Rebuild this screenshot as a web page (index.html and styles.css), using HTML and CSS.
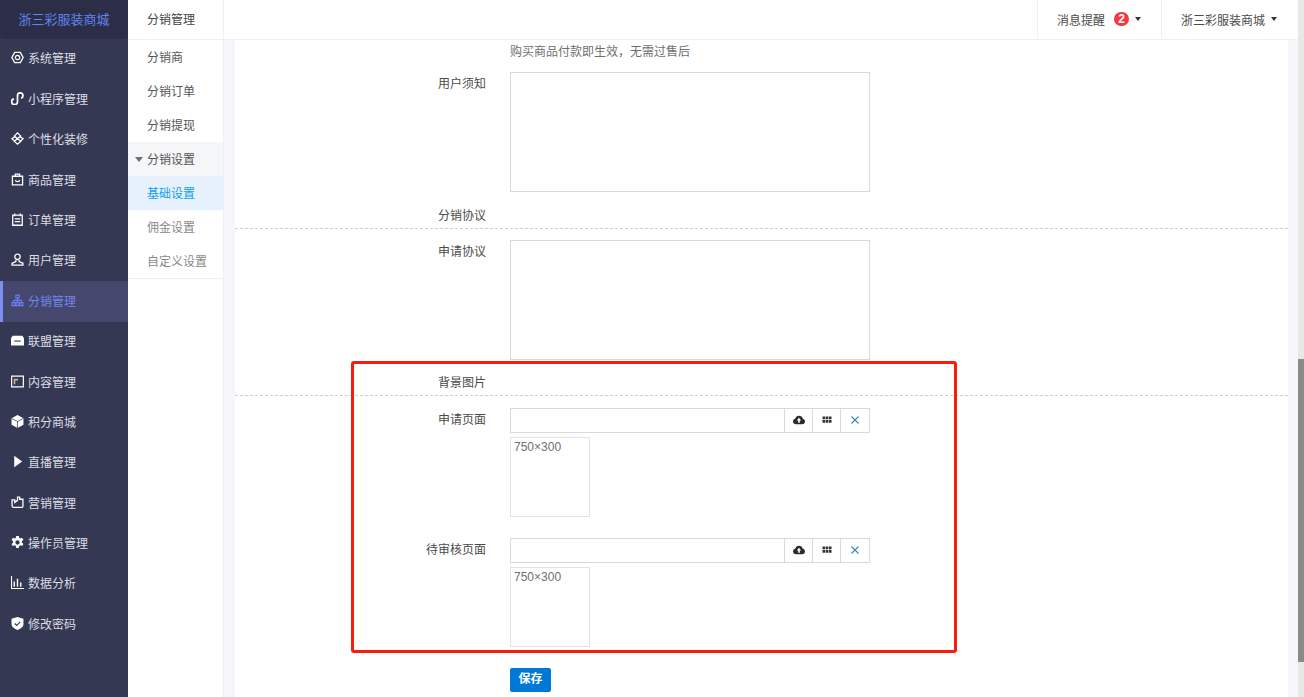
FILE: index.html
```html
<!DOCTYPE html>
<html lang="zh-CN">
<head>
<meta charset="utf-8">
<title>分销设置</title>
<link rel="stylesheet" href="styles.css">
</head>
<body>
<div class="app">
  <aside class="sidebar">
    <div class="logo">浙三彩服装商城</div>
    <nav class="menu">
      <a class="menu-item"><svg class="ic" viewBox="0 0 12 12" fill="none" stroke="#fff" stroke-width="1.2"><path d="M3.4 1.3h5.2L11.2 6 8.6 10.7H3.4L.8 6z"/><circle cx="6" cy="6" r="2"/></svg>系统管理</a>
      <a class="menu-item"><svg class="ic" viewBox="0 0 12 12" fill="none" stroke="#fff" stroke-width="1.6"><path d="M2.700 6.300A2.700 2.700 0 1 0 6 8.800V3.300A2.500 2.500 0 1 1 9.300 5.700"/></svg>小程序管理</a>
      <a class="menu-item"><svg class="ic" viewBox="0 0 12 12" fill="none" stroke="#fff" stroke-width="1.200"><path d="M6 .8 9 3.800 3 8.600 6 11.200 9 8.600 3 3.800zM3.500 4.500.8 6.200 3 8M8.500 4.500l2.700 1.700L9 8"/></svg>个性化装修</a>
      <a class="menu-item"><svg class="ic" viewBox="0 0 12 12" fill="none" stroke="#fff" stroke-width="1.2"><path d="M1.300 3h9.400v8H1.300zM4 3V1h4v2M4 6.500c.5 2 3.500 2 4 0"/></svg>商品管理</a>
      <a class="menu-item"><svg class="ic" viewBox="0 0 12 12" fill="none" stroke="#fff" stroke-width="1.200"><path d="M1.600 2h8.800v9.300H1.600zM3.500.5V3M8.500.5V3M3.500 5.500h5M3.500 8h5"/></svg>订单管理</a>
      <a class="menu-item"><svg class="ic" viewBox="0 0 12 12" fill="none" stroke="#fff" stroke-width="1.200"><circle cx="6" cy="3.500" r="2.500"/><path d="M4.500 6.500V8L1 9.500v1.700h10V9.500L7.500 8V6.500"/></svg>用户管理</a>
      <a class="menu-item menu-item-active"><svg class="ic" viewBox="0 0 12 12" fill="none" stroke="#6d7df0" stroke-width="1.100"><path d="M4.500 1h3v2.500h-3zM1 8h2.800v2.800H1zM4.600 8h2.800v2.800H4.600zM8.200 8H11v2.800H8.200zM6 3.500V8M2.400 8V5.800h7.200V8"/></svg>分销管理</a>
      <a class="menu-item"><svg class="ic" viewBox="0 0 12 12"><path fill="#fff" d="M1.500 1.500h9L12 4v6.500H0V4z"/><path stroke="#353852" stroke-width="1" d="M3 6.500h6"/></svg>联盟管理</a>
      <a class="menu-item"><svg class="ic" viewBox="0 0 12 12" fill="none" stroke="#fff" stroke-width="1.100"><path d="M.6 1.100h10.800v9.800H.6z"/><path fill="#c9b48a" stroke="none" d="M2.500 3.500h4V5H4v3.500H2.500z"/></svg>内容管理</a>
      <a class="menu-item"><svg class="ic" viewBox="0 0 12 12"><path fill="#fff" d="M6 0l5.500 3v6L6 12 .5 9V3z"/><path stroke="#353852" stroke-width=".7" fill="none" d="M.8 3.200 6 6l5.200-2.800M6 6v6"/></svg>积分商城</a>
      <a class="menu-item"><svg class="ic" viewBox="0 0 12 12"><path fill="#fff" d="M3 .8 10.300 6 3 11.200z"/></svg>直播管理</a>
      <a class="menu-item"><svg class="ic" viewBox="0 0 12 12" fill="none" stroke="#fff" stroke-width="1.200"><path d="M1 3.500h2.500V6L6 4V1h2v2h3v6.500c0 .8-.5 1-1 1H2.500C1.800 10.500 1 10 1 9z"/></svg>营销管理</a>
      <a class="menu-item"><svg class="ic" viewBox="0 0 12 12"><path fill="#fff" fill-rule="evenodd" d="M4.800 0h2.400l.3 1.700 1.200.6 1.600-.7 1.200 2-1.400 1.100v1.500l1.400 1.100-1.200 2-1.600-.7-1.200.7-.3 1.700H4.800l-.3-1.700-1.200-.7-1.600.7-1.200-2 1.400-1.100V4.700L.5 3.600l1.200-2 1.600.7 1.200-.6zM6 4a2 2 0 1 0 0 4 2 2 0 0 0 0-4z"/></svg>操作员管理</a>
      <a class="menu-item"><svg class="ic" viewBox="0 0 12 12" fill="none" stroke="#fff" stroke-width="1"><path d="M.5 0v11.500H12"/><path stroke-width="1.300" d="M3 10V5M6 10V2.500M9 10V6"/></svg>数据分析</a>
      <a class="menu-item"><svg class="ic" viewBox="0 0 12 12"><path fill="#fff" d="M6 0l5.500 1.700v4.800C11.500 9.500 8.500 11.200 6 12 3.500 11.200.5 9.500.5 6.500V1.700z"/><path fill="none" stroke="#353852" stroke-width="1" d="M3.500 6l1.800 1.800 3.200-3.200"/></svg>修改密码</a>
    </nav>
  </aside>

  <aside class="subnav">
    <div class="subnav-title">分销管理</div>
    <ul class="subnav-list">
      <li class="subnav-item subnav-strong">分销商</li>
      <li class="subnav-item subnav-strong">分销订单</li>
      <li class="subnav-item subnav-strong">分销提现</li>
      <li class="subnav-item subnav-strong subnav-group"><span class="subnav-caret"></span>分销设置</li>
      <li class="subnav-item subnav-current">基础设置</li>
      <li class="subnav-item">佣金设置</li>
      <li class="subnav-item">自定义设置</li>
    </ul>
  </aside>

  <div class="main">
    <header class="topbar">
      <div class="topbar-item topbar-notice">消息提醒<span class="badge">2</span><span class="caret"></span></div>
      <div class="topbar-item topbar-shop">浙三彩服装商城<span class="caret"></span></div>
    </header>
    <div class="content">
      <form class="card">
        <div class="form-row hint-row"><div></div><div class="hint">购买商品付款即生效，无需过售后</div></div>
        <div class="form-row"><label class="label">用户须知</label><div class="area"></div></div>
        <div class="section section-a"><span class="section-title">分销协议</span></div>
        <div class="form-row"><label class="label">申请协议</label><div class="area"></div></div>
        <div class="section section-b"><span class="section-title">背景图片</span></div>
        <div class="form-row image-row">
          <label class="label">申请页面</label>
          <div>
            <div class="input-group">
              <div class="input"></div>
              <button type="button" class="addon"><svg class="addon-ic" viewBox="0 0 12 12"><path fill="#2b2b2b" d="M3 10.200C1.300 10.200 0 9 0 7.400 0 6 1 5 2.200 4.800 2.700 3 4.200 1.800 6 1.800c1.900 0 3.400 1.300 3.800 3C11.100 5 12 6.100 12 7.400c0 1.600-1.200 2.800-2.800 2.800z"/><path fill="#fff" d="M6 3.800 8.200 6.500H6.800v2.300H5.200V6.500H3.800z"/></svg></button>
              <button type="button" class="addon"><svg class="addon-ic" viewBox="0 0 12 12"><path fill="#333" d="M1.500 2.500h2.600v2.800H1.500zM4.700 2.500h2.600v2.800H4.700zM7.900 2.500h2.600v2.800H7.900zM1.500 6h2.600v2.800H1.500zM4.700 6h2.600v2.800H4.700zM7.900 6h2.600v2.800H7.900z"/></svg></button>
              <button type="button" class="addon addon-last"><svg class="addon-ic" viewBox="0 0 12 12" fill="none" stroke="#3a86b8" stroke-width="1.100"><path d="M2.500 2.500l7 7M9.500 2.500l-7 7"/></svg></button>
            </div>
            <div class="preview">750×300</div>
          </div>
        </div>
        <div class="form-row image-row">
          <label class="label">待审核页面</label>
          <div>
            <div class="input-group">
              <div class="input"></div>
              <button type="button" class="addon"><svg class="addon-ic" viewBox="0 0 12 12"><path fill="#2b2b2b" d="M3 10.200C1.300 10.200 0 9 0 7.400 0 6 1 5 2.200 4.800 2.700 3 4.200 1.800 6 1.800c1.900 0 3.400 1.300 3.800 3C11.100 5 12 6.100 12 7.400c0 1.600-1.200 2.800-2.800 2.800z"/><path fill="#fff" d="M6 3.800 8.200 6.500H6.800v2.300H5.200V6.500H3.800z"/></svg></button>
              <button type="button" class="addon"><svg class="addon-ic" viewBox="0 0 12 12"><path fill="#333" d="M1.500 2.500h2.600v2.800H1.500zM4.700 2.500h2.600v2.800H4.700zM7.900 2.500h2.600v2.800H7.900zM1.500 6h2.600v2.800H1.500zM4.700 6h2.600v2.800H4.700zM7.900 6h2.600v2.800H7.900z"/></svg></button>
              <button type="button" class="addon addon-last"><svg class="addon-ic" viewBox="0 0 12 12" fill="none" stroke="#3a86b8" stroke-width="1.100"><path d="M2.500 2.500l7 7M9.500 2.500l-7 7"/></svg></button>
            </div>
            <div class="preview">750×300</div>
          </div>
        </div>
        <div class="form-row"><div></div><div><button type="button" class="save">保存</button></div></div>
      </form>
    </div>
  </div>

  <div class="scrollbar"><div class="scrollbar-thumb"></div></div>
  <div class="annotation"></div>
</div>
</body>
</html>
```

FILE: styles.css
```css
* { box-sizing: border-box; }
html, body { margin: 0; height: 100%; overflow: hidden; }
body {
  font-family: "Liberation Sans", "Noto Sans CJK SC", sans-serif;
  font-size: 12px;
  color: #595961;
  background: #fff;
}
.app { position: relative; display: flex; width: 1304px; height: 697px; overflow: hidden; }

.sidebar { flex: none; width: 128px; background: #353852; }
.logo {
  height: 39px;
  line-height: 39px;
  text-align: center;
  font-size: 13px;
  color: #5f83f0;
  background: #2c2e48;
  border-radius: 0 0 4px 4px;
}
.menu { display: flex; flex-direction: column; }
.menu-item {
  display: flex;
  align-items: center;
  height: 40.4px;
  padding: 0 0 2.600px 11px;
  color: #dcdde4;
  white-space: nowrap;
}
.menu-item-active {
  background: #45486c;
  border-left: 3px solid #7d8ff5;
  padding-left: 8px;
  color: #7285f2;
}
.ic { flex: none; width: 13px; height: 13px; margin-right: 4px; }

.subnav { flex: none; width: 96px; background: #fff; border-right: 1px solid #eef0f3; }
.subnav-title { height: 40px; padding-left: 19px; line-height: 40px; color: #444; border-bottom: 1px solid #eef0f3; }
.subnav-list { list-style: none; margin: 0; padding: 0; border-bottom: 1px solid #eef0f3; }
.subnav-item { position: relative; height: 34px; line-height: 36px; padding-left: 19px; color: #8a8a8a; }
.subnav-strong { color: #555; }
.subnav-group { background: #f5f6f8; }
.subnav-current { background: #e6f1fb; color: #0fa0ee; }
.subnav-caret {
  position: absolute;
  left: 7px;
  top: 15px;
  border-style: solid;
  border-width: 5px 4px 0;
  border-color: #6f6f6f transparent transparent;
}

.main { flex: 1; min-width: 0; display: flex; flex-direction: column; background: #f5f6f9; }
.topbar {
  flex: none;
  display: flex;
  justify-content: flex-end;
  height: 40px;
  padding-bottom: 1px;
  background: #fff;
  border-bottom: 1px solid #eef0f3;
}
.topbar-item {
  display: flex;
  align-items: center;
  color: #4a4a4a;
  border-left: 1px solid #eef0f3;
}
.topbar-notice { width: 124px; padding-left: 19px; }
.topbar-shop { width: 137px; padding-left: 19px; }
.badge {
  width: 15px;
  height: 14px;
  margin-left: 9px;
  border-radius: 7px;
  background: #f4383d;
  color: #fff;
  font-size: 12px;
  font-weight: 700;
  line-height: 14px;
  text-align: center;
}
.caret {
  margin-left: 6px;
  border-style: solid;
  border-width: 4px 3.500px 0;
  border-color: #333 transparent transparent;
}

.content { flex: 1; min-height: 0; padding: 0 10px 0 11px; overflow: hidden; }
.card { height: 100%; padding-top: 4px; background: #fff; }
.form-row { display: grid; grid-template-columns: 275px 360px; }
.hint-row { margin-bottom: 12px; }
.hint { height: 16px; line-height: 16px; color: #6f6f6f; }
.label { padding-right: 24px; text-align: right; line-height: 24px; color: #4a4a4a; }
.area { height: 120px; border: 1px solid #d9d9d9; background: #fff; }
.section { border-bottom: 1px dashed #cfcfcf; margin-bottom: 11px; line-height: 16px; }
.section-a { padding: 16px 0 4px; }
.section-b { padding: 15px 0 4px; margin-bottom: 12px; }
.section-title { display: block; width: 251px; text-align: right; color: #4a4a4a; }

.image-row { margin-bottom: 21px; }
.input-group { display: flex; height: 25px; margin-bottom: 4px; }
.input { flex: 1; border: 1px solid #d9d9d9; border-right: 0; }
.addon {
  flex: none;
  display: flex;
  align-items: center;
  justify-content: center;
  width: 28px;
  padding: 0 0 1px;
  background: #fff;
  border: 1px solid #d9d9d9;
  border-right: 0;
}
.addon-last { width: 30px; border-right: 1px solid #d9d9d9; }
.addon-ic { width: 12px; height: 12px; }
.preview {
  width: 80px;
  height: 80px;
  padding: 2px 3px;
  border: 1px solid #e3e3e3;
  color: #6f6f6f;
  line-height: 14px;
}
.save {
  display: block;
  width: 41px;
  height: 24px;
  padding: 0 0 2px;
  border: 0;
  border-radius: 2px;
  background: #0078d7;
  color: #fff;
  font: 700 12px/22px "Liberation Sans", "Noto Sans CJK SC", sans-serif;
}

.scrollbar { flex: none; width: 6px; padding-top: 359px; background: #e8e8e8; }
.scrollbar-thumb { height: 303px; background: #8a8a8a; }

.annotation {
  position: absolute;
  left: 351px;
  top: 361px;
  width: 606px;
  height: 292px;
  border: 3px solid #fb1a0e;
  border-radius: 3px;
  pointer-events: none;
}
```
